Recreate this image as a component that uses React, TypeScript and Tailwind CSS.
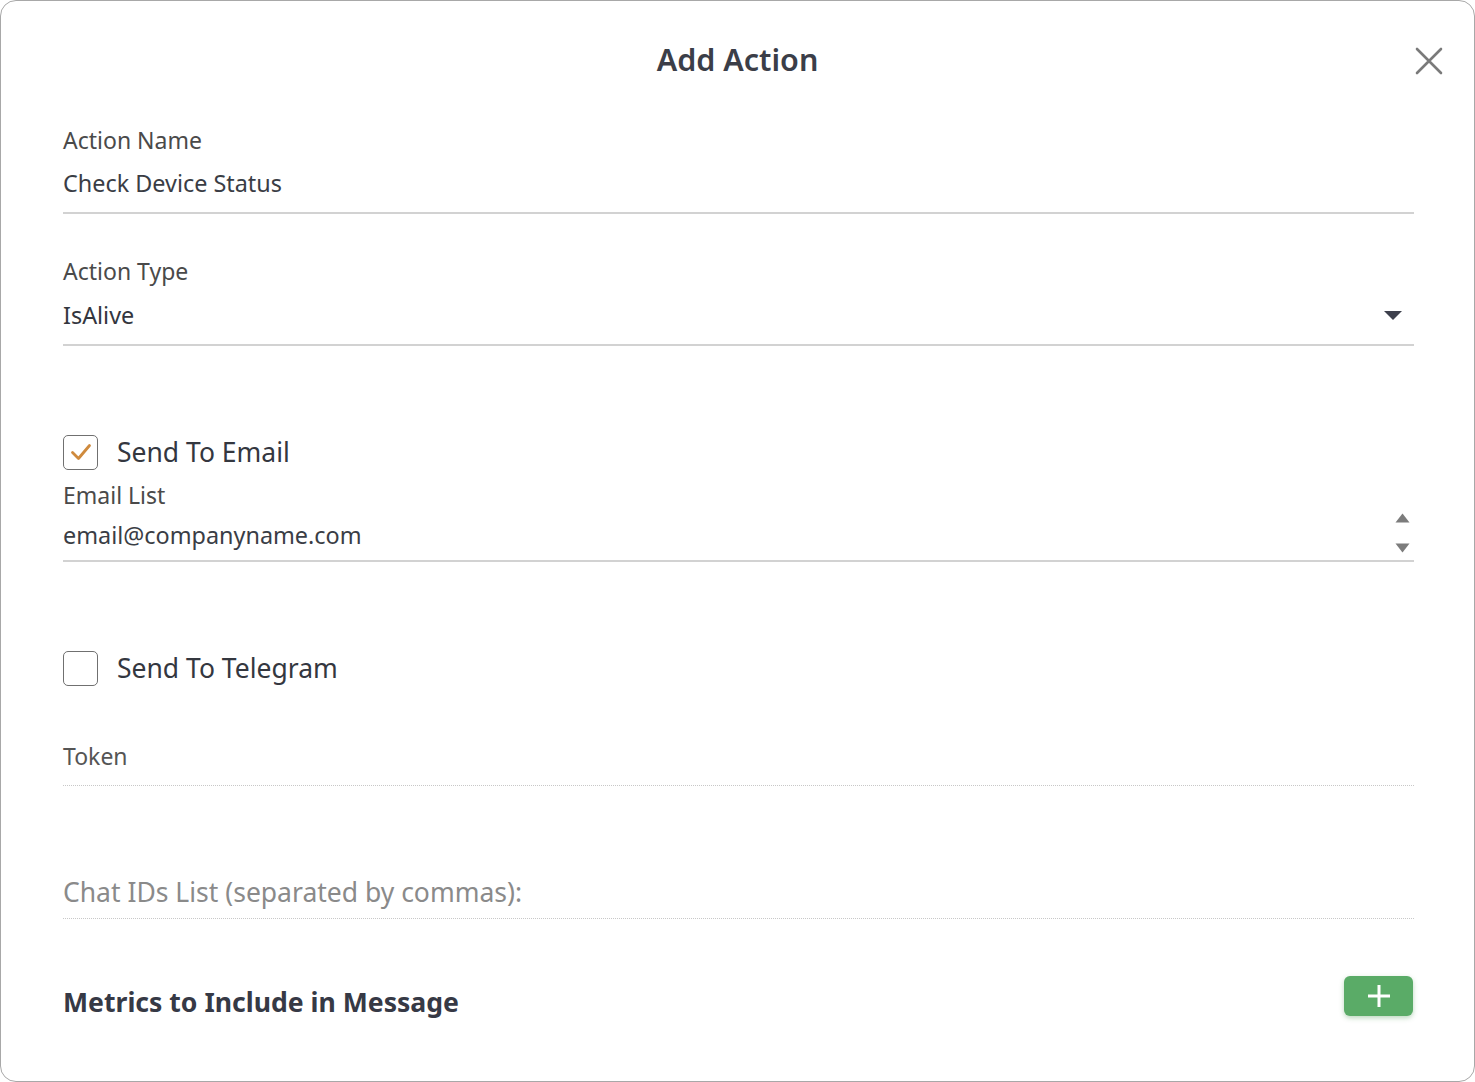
import React from "react";

const font = { fontFamily: '"Noto Sans", "Open Sans", sans-serif' };

function Check({ checked, label }: { checked: boolean; label: string }) {
  return (
    <div className="flex items-center h-[36px]">
      <div className="w-[35px] h-[35px] rounded-[5px] border border-[#707070] flex items-center justify-center bg-white">
        {checked && (
          <svg width="24" height="24" viewBox="0 0 24 24" fill="none">
            <path d="M3.5 12.5 L9.5 18.5 L20.5 5.5" stroke="#cf8a3d" strokeWidth="2.8" strokeLinecap="round" strokeLinejoin="round" />
          </svg>
        )}
      </div>
      <span className="ml-[19px] text-[26.5px] leading-[36px] text-[#34373f]">{label}</span>
    </div>
  );
}

export default function App() {
  return (
    <div className="w-[1475px] h-[1082px] bg-white" style={font}>
      <div className="w-full h-full border border-[#a8a8a8] rounded-[16px] bg-white flex flex-col">
        <div className="h-[119px] grid grid-cols-[1fr_auto_1fr] items-center">
          <div />
          <div className="-mt-[3px] text-[30.5px] font-semibold text-[#3b3e48] leading-[40px]">Add Action</div>
          <div className="flex justify-end pr-[31px]">
            <svg width="28" height="28" viewBox="0 0 28 28">
              <path d="M2 2 L26 26 M26 2 L2 26" stroke="#7a7a7a" strokeWidth="2.6" strokeLinecap="round" />
            </svg>
          </div>
        </div>

        <div className="ml-[62px] mr-[60px] flex flex-col">
          <div className="mt-[5px] text-[23px] leading-[30px] text-[#4a4a4a]">Action Name</div>
          <div className="border-b-2 border-[#d2d2d2] pb-[14px]">
            <div className="mt-[13px] text-[23.4px] leading-[30px] text-[#3a3d45]">Check Device Status</div>
          </div>

          <div className="mt-[42px] text-[23px] leading-[30px] text-[#4a4a4a]">Action Type</div>
          <div className="border-b-2 border-[#d2d2d2] pb-[14px] flex items-center justify-between mt-[14px]">
            <div className="text-[23.4px] leading-[30px] text-[#33363e]">IsAlive</div>
            <svg width="18" height="9" viewBox="0 0 18 9" className="mr-[12px]">
              <path d="M0 0 L18 0 L9 9 Z" fill="#3d404c" />
            </svg>
          </div>

          <div className="mt-[88px]">
            <Check checked label="Send To Email" />
          </div>
          <div className="mt-[10px] text-[23px] leading-[30px] text-[#4a4a4a]">Email List</div>
          <div className="border-b-2 border-[#d2d2d2] pb-[10px] mt-[10px] h-[42px] flex items-center justify-between">
            <div className="text-[23.4px] leading-[30px] text-[#3a3d45]">email@companyname.com</div>
            <div className="h-[40px] -mt-[4px] flex flex-col items-center justify-between mr-[4px]">
              <svg width="15" height="10" viewBox="0 0 15 10">
                <path d="M7.5 0.5 L14.5 9.5 L0.5 9.5 Z" fill="#7c7c7c" />
              </svg>
              <svg width="15" height="10" viewBox="0 0 15 10">
                <path d="M0.5 0.5 L14.5 0.5 L7.5 9.5 Z" fill="#7c7c7c" />
              </svg>
            </div>
          </div>

          <div className="mt-[88px]">
            <Check checked={false} label="Send To Telegram" />
          </div>

          <div className="mt-[55px] border-b border-dotted border-[#c8c8c8] pb-[14px]">
            <div className="text-[23px] leading-[30px] text-[#555555]">Token</div>
          </div>

          <div className="mt-[91px] border-b border-dotted border-[#c8c8c8] pb-[11px]">
            <div className="text-[26.5px] leading-[30px] text-[#8a8a8a]">Chat IDs List (separated by commas):</div>
          </div>

          <div className="mt-[57px] flex items-start justify-between">
            <div className="mt-[8px] text-[26.6px] leading-[36px] font-bold text-[#363945]">Metrics to Include in Message</div>
            <button className="w-[69px] h-[40px] rounded-[6px] bg-[#5aab67] shadow-[0_2px_5px_rgba(60,140,70,0.35)] flex items-center justify-center mr-[1px]">
              <svg width="24" height="24" viewBox="0 0 24 24">
                <path d="M12 1 V23 M1 12 H23" stroke="#ffffff" strokeWidth="3" />
              </svg>
            </button>
          </div>
        </div>
      </div>
    </div>
  );
}
